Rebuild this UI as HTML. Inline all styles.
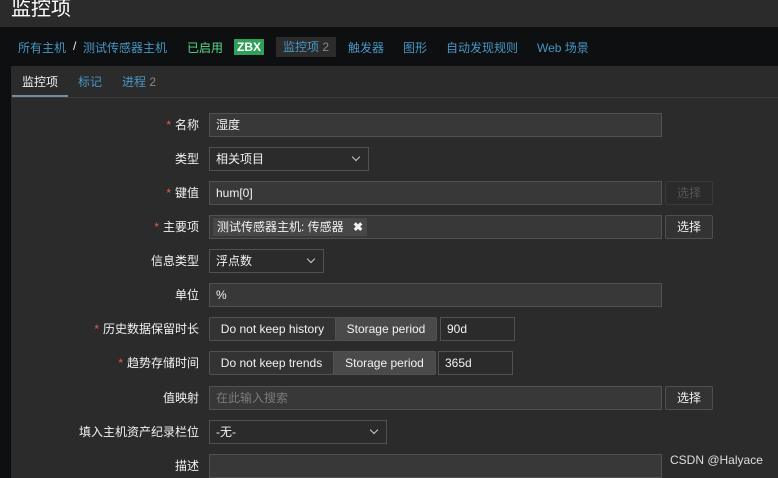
<!DOCTYPE html>
<html style="width:778px;height:478px;overflow:hidden"><head><meta charset="utf-8"><style>
*{box-sizing:border-box;margin:0;padding:0}
body{width:778px;height:478px;overflow:hidden;background:#2b2b2b;font-family:"Liberation Sans","Noto Sans CJK SC",sans-serif;font-size:12px;color:#f2f2f2;position:relative}
.abs{position:absolute}
.title{left:11px;top:-8px;font-size:20px;color:#fff}
.nav{left:0;top:27px;width:778px;height:39px;background:#0e0f11}
.nav span{position:absolute;top:12px;color:#4796c4;font-size:12px}
.left{left:0;top:66px;width:11px;height:412px;background:#0e0f11}
.tabs span{position:absolute;top:73px;font-size:12px;color:#4796c4}
.lbl{position:absolute;right:579px;font-size:12px;color:#f2f2f2;white-space:nowrap}
.lbl b{color:#e45959;font-weight:normal;margin-right:4px}
.inp{position:absolute;height:24px;background:#383838;border:1px solid #515151;padding:4px 6px;font-size:12px;line-height:14px;color:#f2f2f2}
.sel::after{content:"";position:absolute;right:9px;top:6px;width:5px;height:5px;border-right:1px solid #ccc;border-bottom:1px solid #ccc;transform:rotate(45deg)}
.btn{position:absolute;width:48px;height:24px;border:1px solid #4f4f4f;background:#333;text-align:center;line-height:22px;font-size:12px;color:#f2f2f2;border-radius:2px}
.seg{position:absolute;height:24px;border:1px solid #515151;font-size:12px;line-height:22px;text-align:center;border-radius:2px}
</style></head><body>
<div class="abs title">监控项</div>
<div class="abs nav">
<span style="left:18px">所有主机</span><span style="left:73px;color:#f2f2f2">/</span>
<span style="left:83px">测试传感器主机</span>
<span style="left:187px;color:#59db8f">已启用</span>
<span style="left:234px;top:12px;background:#2f9f5a;color:#fff;padding:1px 3px;font-weight:bold;line-height:14px">ZBX</span>
<span style="left:276px;top:10px;background:#2b2b2b;color:#4796c4;padding:2px 7px;line-height:16px">监控项 <i style="font-style:normal;color:#888">2</i></span>
<span style="left:348px">触发器</span><span style="left:403px">图形</span>
<span style="left:446px">自动发现规则</span><span style="left:537px">Web 场景</span>
</div>
<div class="abs left"></div>
<div class="tabs">
<span style="left:22px;color:#f2f2f2">监控项</span>
<span style="left:78px">标记</span>
<span style="left:122px">进程 <i style="font-style:normal;color:#888">2</i></span>
</div>
<div class="abs" style="left:12px;top:95px;width:56px;height:3px;background:#768d99"></div>
<div class="abs" style="left:11px;top:97px;width:767px;height:1px;background:#3a3a3a"></div>

<div class="lbl" style="top:116px"><b>*</b>名称</div>
<div class="inp" style="left:209px;top:113px;width:453px">湿度</div>
<div class="lbl" style="top:150px">类型</div>
<div class="inp sel" style="left:209px;top:147px;width:160px;background:#2b2b2b">相关项目</div>
<div class="lbl" style="top:184px"><b>*</b>键值</div>
<div class="inp" style="left:209px;top:181px;width:453px">hum[0]</div>
<div class="btn" style="left:665px;top:181px;color:#555;background:#2b2b2b;border-color:#3a3a3a">选择</div>
<div class="lbl" style="top:218px"><b>*</b>主要项</div>
<div class="inp" style="left:209px;top:215px;width:453px;padding:2px 3px"><span style="display:inline-block;background:#474747;padding:1px 4px;line-height:16px">测试传感器主机: 传感器 <b style="margin-left:6px">✖</b></span></div>
<div class="btn" style="left:665px;top:215px">选择</div>
<div class="lbl" style="top:252px">信息类型</div>
<div class="inp sel" style="left:209px;top:249px;width:115px;background:#2b2b2b">浮点数</div>
<div class="lbl" style="top:286px">单位</div>
<div class="inp" style="left:209px;top:283px;width:453px">%</div>
<div class="lbl" style="top:320px"><b>*</b>历史数据保留时长</div>
<div class="seg" style="left:209px;top:317px;width:127px;background:#333">Do not keep history</div>
<div class="seg" style="left:335px;top:317px;width:102px;background:#4a4a4a">Storage period</div>
<div class="inp" style="left:440px;top:317px;width:75px;background:#2b2b2b">90d</div>
<div class="lbl" style="top:354px"><b>*</b>趋势存储时间</div>
<div class="seg" style="left:209px;top:351px;width:125px;background:#333">Do not keep trends</div>
<div class="seg" style="left:333px;top:351px;width:103px;background:#4a4a4a">Storage period</div>
<div class="inp" style="left:438px;top:351px;width:75px;background:#2b2b2b">365d</div>
<div class="lbl" style="top:389px">值映射</div>
<div class="inp" style="left:209px;top:386px;width:453px;color:#7a7a7a">在此输入搜索</div>
<div class="btn" style="left:665px;top:386px">选择</div>
<div class="lbl" style="top:423px">填入主机资产纪录栏位</div>
<div class="inp sel" style="left:209px;top:420px;width:178px;background:#2b2b2b">-无-</div>
<div class="lbl" style="top:457px">描述</div>
<div class="inp" style="left:209px;top:454px;width:453px;height:24px"></div>
<div class="abs" style="left:670px;top:453px;color:#ddd;font-size:12px">CSDN @Halyace</div>
</body></html>
